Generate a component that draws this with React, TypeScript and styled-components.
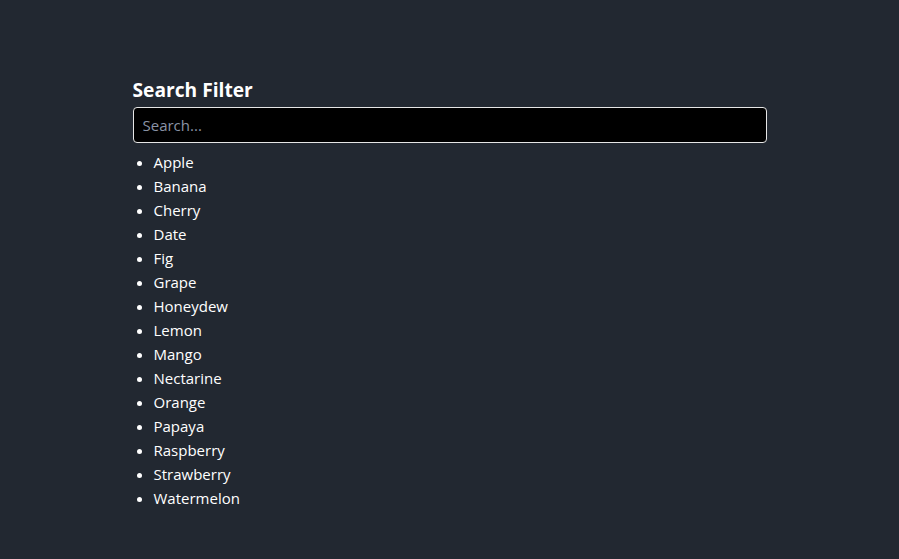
import React, { useState } from 'react';
import styled, { createGlobalStyle } from 'styled-components';

const GlobalStyle = createGlobalStyle`
  html, body {
    margin: 0;
    padding: 0;
    background-color: #222831;
    color: #ffffff;
    font-family: 'Open Sans', 'Segoe UI', sans-serif;
  }
`;

const Page = styled.div`
  min-height: 100vh;
  padding-top: 76px;
  box-sizing: border-box;
`;

const Container = styled.div`
  width: 634px;
  margin: 0 auto;
`;

const Title = styled.h2`
  margin: 0 0 3px;
  font-size: 19.2px;
  font-weight: 700;
  line-height: 28px;
`;

const SearchInput = styled.input`
  display: block;
  width: 100%;
  height: 36px;
  box-sizing: border-box;
  padding: 0 9px;
  background: #000000;
  color: #ffffff;
  border: 1px solid #e6e6e6;
  border-radius: 4px;
  font-family: inherit;
  font-size: 15px;
  outline: none;

  &::placeholder {
    color: #8a93a6;
  }
`;

const FruitList = styled.ul`
  margin: 7px 0 0;
  padding-left: 21px;
`;

const FruitItem = styled.li`
  font-size: 15px;
  line-height: 24px;
`;

const fruits = [
  'Apple',
  'Banana',
  'Cherry',
  'Date',
  'Fig',
  'Grape',
  'Honeydew',
  'Lemon',
  'Mango',
  'Nectarine',
  'Orange',
  'Papaya',
  'Raspberry',
  'Strawberry',
  'Watermelon',
];

export const App = () => {
  const [query, setQuery] = useState('');
  const shown = fruits.filter((f) => f.toLowerCase().includes(query.toLowerCase()));

  return (
    <Page>
      <GlobalStyle />
      <Container>
        <Title>Search Filter</Title>
        <SearchInput
          type="text"
          placeholder="Search..."
          value={query}
          onChange={(e) => setQuery(e.target.value)}
        />
        <FruitList>
          {shown.map((fruit) => (
            <FruitItem key={fruit}>{fruit}</FruitItem>
          ))}
        </FruitList>
      </Container>
    </Page>
  );
};

export default App;
